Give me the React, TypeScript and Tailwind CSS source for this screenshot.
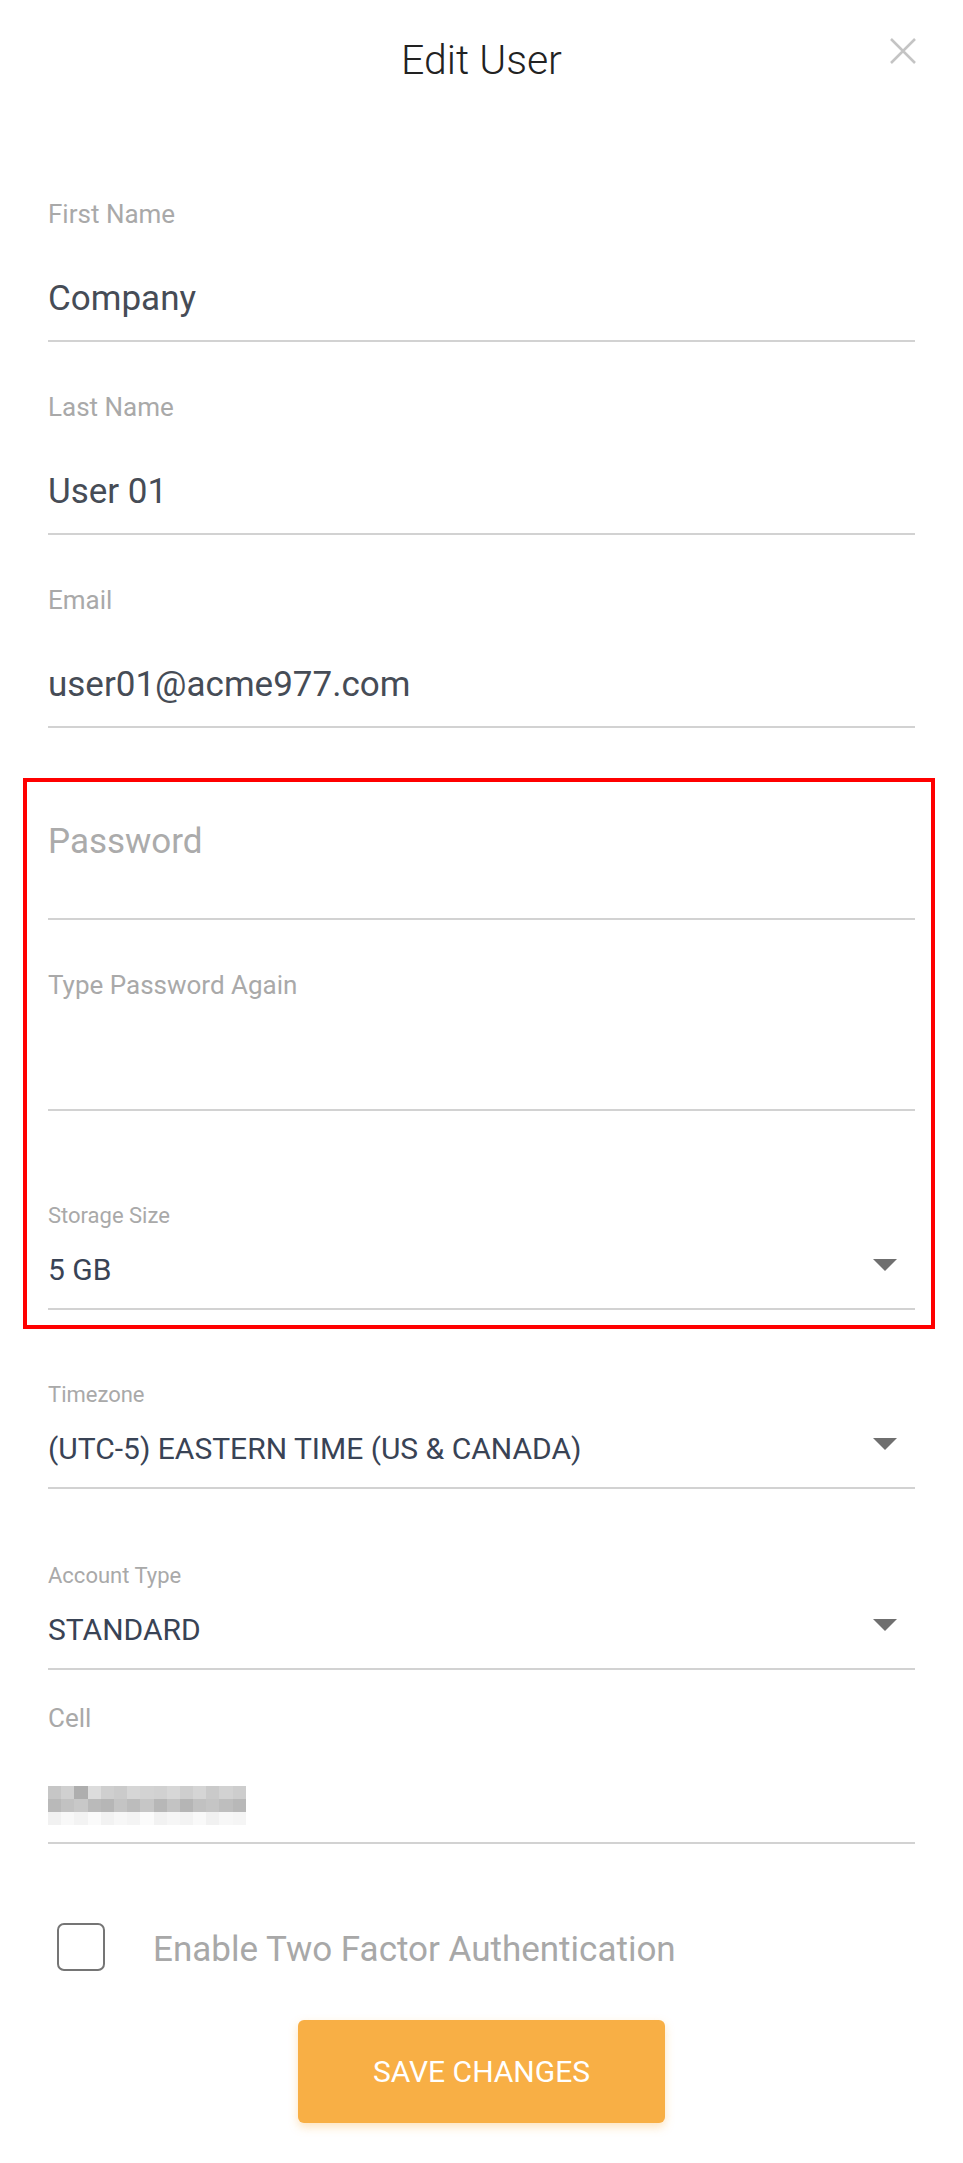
import React from "react"

const lineCls = "border-b-2 border-[#d2d2d2]"

const TextField = ({
  label,
  value,
  pt,
}: {
  label: string
  value?: React.ReactNode
  pt: string
}) => {
  return (
    <div className={`${lineCls} pb-[19px] ${pt}`}>
      <div className="h-[30px] text-[26px] leading-[30px] text-[#a9a9a9]">
        {label}
      </div>
      <div className="mt-[48px] h-[44px] text-[35px] leading-[44px] text-[#464c56]">
        {value}
      </div>
    </div>
  )
}

const SelectField = ({
  label,
  value,
  pt,
}: {
  label: string
  value: string
  pt: string
}) => {
  return (
    <div className={`${lineCls} pb-[18px] ${pt}`}>
      <div className="h-[26px] text-[22px] leading-[26px] text-[#a9a9a9]">
        {label}
      </div>
      <div className="mt-[21px] flex h-[40px] items-center justify-between">
        <span className="text-[30px] leading-[40px] text-[#394355]">
          {value}
        </span>
        <svg
          className="mb-[10px] mr-[18px]"
          width="24"
          height="12"
          viewBox="0 0 24 12"
        >
          <polygon points="0,0 24,0 12,12" fill="#6f6f6f" />
        </svg>
      </div>
    </div>
  )
}

// pixelated phone number
const mosaic = [
  [
    "bg-[#c6c6c6]", "bg-[#d0d0d0]", "bg-[#aeaeae]", "bg-[#dcdcdc]", "bg-[#cfcfcf]",
    "bg-[#cbcbcb]", "bg-[#d6d6d6]", "bg-[#d3d3d3]", "bg-[#d1d1d1]", "bg-[#d7d7d7]",
    "bg-[#cecece]", "bg-[#d5d5d5]", "bg-[#cacaca]", "bg-[#d2d2d2]", "bg-[#cdcdcd]",
  ],
  [
    "bg-[#b9b9b9]", "bg-[#c2c2c2]", "bg-[#c8c8c8]", "bg-[#bababa]", "bg-[#b6b6b6]",
    "bg-[#c4c4c4]", "bg-[#bcbcbc]", "bg-[#c6c6c6]", "bg-[#b7b7b7]", "bg-[#c3c3c3]",
    "bg-[#b5b5b5]", "bg-[#c1c1c1]", "bg-[#c5c5c5]", "bg-[#bebebe]", "bg-[#b8b8b8]",
  ],
  [
    "bg-[#f1f1f1]", "bg-[#f8f8f8]", "bg-[#f3f3f3]", "bg-[#fafafa]", "bg-[#f2f2f2]",
    "bg-[#f7f7f7]", "bg-[#f4f4f4]", "bg-[#fbfbfb]", "bg-[#f2f2f2]", "bg-[#f6f6f6]",
    "bg-[#f3f3f3]", "bg-[#f9f9f9]", "bg-[#f1f1f1]", "bg-[#f7f7f7]", "bg-[#f5f5f5]",
  ],
]

const BlurredPhone = () => {
  return (
    <div className="pt-[5px]">
      <div className="grid w-[198px] grid-cols-[repeat(15,13.2px)]">
        {mosaic.flat().map((c, i) => (
          <div key={i} className={`h-[13px] ${c}`} />
        ))}
      </div>
    </div>
  )
}

const App = () => {
  return (
    <div className="relative min-h-[2163px] w-full bg-white px-[48px] pb-[40px] font-['Roboto',sans-serif]">
      <h1 className="pt-[36px] text-center text-[41px] font-light leading-[48px] text-[#222222]">
        Edit User
      </h1>
      <button className="absolute right-[47px] top-[38px] h-[26px] w-[26px]">
        <svg width="26" height="26" viewBox="0 0 26 26">
          <path
            d="M1 1 L25 25 M25 1 L1 25"
            stroke="#c4c4c4"
            strokeWidth="2.5"
            fill="none"
          />
        </svg>
      </button>

      <TextField label="First Name" value="Company" pt="pt-[115px]" />
      <TextField label="Last Name" value="User 01" pt="pt-[50px]" />
      <TextField label="Email" value="user01@acme977.com" pt="pt-[50px]" />

      <div className="relative">
        <div className={`${lineCls} pb-[54px] pt-[92px]`}>
          <div className="h-[44px] text-[35px] leading-[44px] text-[#ababab]">
            Password
          </div>
        </div>
        <div className={`${lineCls} pb-[17px] pt-[50px]`}>
          <div className="h-[30px] text-[26px] leading-[30px] text-[#a9a9a9]">
            Type Password Again
          </div>
          <div className="mt-[48px] h-[44px]" />
        </div>
        <SelectField label="Storage Size" value="5 GB" pt="pt-[92px]" />
        <div className="pointer-events-none absolute -bottom-[19px] -left-[25px] -right-[20px] top-[50px] border-4 border-[#ff0000]" />
      </div>

      <SelectField
        label="Timezone"
        value="(UTC-5) EASTERN TIME (US & CANADA)"
        pt="pt-[72px]"
      />
      <SelectField label="Account Type" value="STANDARD" pt="pt-[74px]" />

      <div className={`${lineCls} pb-[17px] pt-[33px]`}>
        <div className="h-[30px] text-[26px] leading-[30px] text-[#a9a9a9]">
          Cell
        </div>
        <div className="mt-[48px] h-[44px]">
          <BlurredPhone />
        </div>
      </div>

      <label className="mt-[79px] flex items-start">
        <span className="ml-[9px] h-[48px] w-[48px] rounded-[7px] border-2 border-[#757575]" />
        <span className="ml-[48px] pt-[3px] text-[35px] leading-[48px] text-[#a8a8a8]">
          Enable Two Factor Authentication
        </span>
      </label>

      <button className="mx-auto mt-[46px] block h-[103px] w-[367px] rounded-[6px] bg-[#f8af45] text-[30px] text-white shadow-[0_4px_10px_rgba(248,175,69,0.35)]">
        SAVE CHANGES
      </button>
    </div>
  )
}

export default App
